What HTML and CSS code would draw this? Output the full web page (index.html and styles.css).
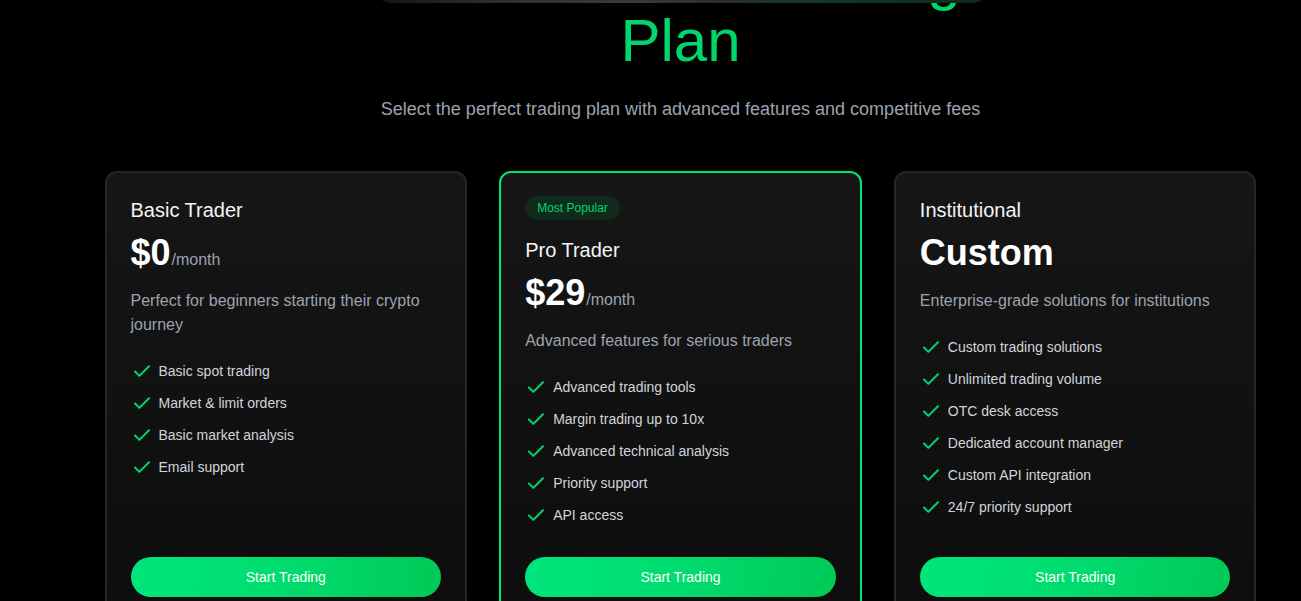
FILE: index.html
```html
<!DOCTYPE html>
<html lang="en">
<head>
<meta charset="utf-8">
<title>Choose Your Trading Plan</title>
<link rel="stylesheet" href="styles.css">
</head>
<body>
<div class="page">
  <div class="content">
    <header class="hero">
      <h1 class="hero-title">Choose Your Trading<br>Plan</h1>
      <p class="hero-sub">Select the perfect trading plan with advanced features and competitive fees</p>
    </header>

    <div class="plans">
      <div class="card">
        <h3 class="card-title">Basic Trader</h3>
        <div class="price"><span class="amount">$0</span><span class="period">/month</span></div>
        <p class="desc">Perfect for beginners starting their crypto journey</p>
        <ul class="features">
          <li><svg class="check" viewBox="0 0 20 20"><path d="M4 10.5 8.4 14.9 18 5.3"/></svg><span>Basic spot trading</span></li>
          <li><svg class="check" viewBox="0 0 20 20"><path d="M4 10.5 8.4 14.9 18 5.3"/></svg><span>Market &amp; limit orders</span></li>
          <li><svg class="check" viewBox="0 0 20 20"><path d="M4 10.5 8.4 14.9 18 5.3"/></svg><span>Basic market analysis</span></li>
          <li><svg class="check" viewBox="0 0 20 20"><path d="M4 10.5 8.4 14.9 18 5.3"/></svg><span>Email support</span></li>
        </ul>
        <button class="btn">Start Trading</button>
      </div>

      <div class="card card-popular">
        <span class="badge">Most Popular</span>
        <h3 class="card-title">Pro Trader</h3>
        <div class="price"><span class="amount">$29</span><span class="period">/month</span></div>
        <p class="desc">Advanced features for serious traders</p>
        <ul class="features">
          <li><svg class="check" viewBox="0 0 20 20"><path d="M4 10.5 8.4 14.9 18 5.3"/></svg><span>Advanced trading tools</span></li>
          <li><svg class="check" viewBox="0 0 20 20"><path d="M4 10.5 8.4 14.9 18 5.3"/></svg><span>Margin trading up to 10x</span></li>
          <li><svg class="check" viewBox="0 0 20 20"><path d="M4 10.5 8.4 14.9 18 5.3"/></svg><span>Advanced technical analysis</span></li>
          <li><svg class="check" viewBox="0 0 20 20"><path d="M4 10.5 8.4 14.9 18 5.3"/></svg><span>Priority support</span></li>
          <li><svg class="check" viewBox="0 0 20 20"><path d="M4 10.5 8.4 14.9 18 5.3"/></svg><span>API access</span></li>
        </ul>
        <button class="btn">Start Trading</button>
      </div>

      <div class="card">
        <h3 class="card-title">Institutional</h3>
        <div class="price"><span class="amount">Custom</span></div>
        <p class="desc">Enterprise-grade solutions for institutions</p>
        <ul class="features">
          <li><svg class="check" viewBox="0 0 20 20"><path d="M4 10.5 8.4 14.9 18 5.3"/></svg><span>Custom trading solutions</span></li>
          <li><svg class="check" viewBox="0 0 20 20"><path d="M4 10.5 8.4 14.9 18 5.3"/></svg><span>Unlimited trading volume</span></li>
          <li><svg class="check" viewBox="0 0 20 20"><path d="M4 10.5 8.4 14.9 18 5.3"/></svg><span>OTC desk access</span></li>
          <li><svg class="check" viewBox="0 0 20 20"><path d="M4 10.5 8.4 14.9 18 5.3"/></svg><span>Dedicated account manager</span></li>
          <li><svg class="check" viewBox="0 0 20 20"><path d="M4 10.5 8.4 14.9 18 5.3"/></svg><span>Custom API integration</span></li>
          <li><svg class="check" viewBox="0 0 20 20"><path d="M4 10.5 8.4 14.9 18 5.3"/></svg><span>24/7 priority support</span></li>
        </ul>
        <button class="btn">Start Trading</button>
      </div>
    </div>

    <div class="topbar"></div>
  </div>
</div>
</body>
</html>
```

FILE: styles.css
```css
* {
  box-sizing: border-box;
}

html, body {
  margin: 0;
  padding: 0;
  background: #000;
}

body {
  font-family: "Liberation Sans", Arial, Helvetica, sans-serif;
  color: #fff;
  overflow: hidden;
}

.page {
  padding-left: 60px;
}

.content {
  position: relative;
  display: flow-root;
  padding-bottom: 40px;
}

.topbar {
  position: absolute;
  top: -37px;
  left: 50%;
  width: 619px;
  height: 40px;
  margin-left: -309px;
  border-radius: 20px;
  background: linear-gradient(90deg, #121212 0%, #2c2c2c 18%, #3a3a3a 42%, #2a2f2b 55%, #0f3a21 75%, #0c2a18 100%);
}

.hero {
  text-align: center;
}

.hero-title {
  margin: -52px 0 0;
  font-size: 60px;
  line-height: 62px;
  font-weight: 400;
  color: #00d66b;
}

.hero-sub {
  margin: 23px 0 0;
  font-size: 18px;
  line-height: 28px;
  color: #9ca3af;
}

.plans {
  max-width: 1152px;
  margin: 48px auto 0;
  display: grid;
  grid-template-columns: repeat(3, 1fr);
  gap: 32px;
}

.card {
  display: flex;
  flex-direction: column;
  align-items: stretch;
  padding: 23px 24px 24px;
  border: 2px solid #262626;
  border-radius: 12px;
  background: linear-gradient(180deg, #161616 0%, #0d0d0d 100%);
}

.card-popular {
  border-color: #00e676;
}

.badge {
  align-self: flex-start;
  padding: 4px 12px;
  margin-bottom: 16px;
  border-radius: 9999px;
  background: #0f2b1b;
  color: #00d66b;
  font-size: 12px;
  line-height: 16px;
}

.card-title {
  margin: 0 0 9px;
  font-size: 20px;
  line-height: 28px;
  font-weight: 400;
  color: #f3f4f6;
}

.price {
  display: flex;
  align-items: baseline;
  margin-bottom: 16px;
}

.amount {
  font-size: 36px;
  line-height: 40px;
  font-weight: 700;
  color: #fff;
}

.period {
  margin-left: 1px;
  font-size: 16px;
  line-height: 24px;
  color: #9ca3af;
}

.desc {
  margin: 0 0 24px;
  font-size: 16px;
  line-height: 24px;
  color: #9ca3af;
}

.features {
  list-style: none;
  margin: 0 0 32px;
  padding: 0;
  flex-grow: 1;
  display: flex;
  flex-direction: column;
  gap: 12px;
}

.features li {
  display: flex;
  align-items: center;
  gap: 8px;
  font-size: 14px;
  line-height: 20px;
  color: #d1d5db;
}

.check {
  width: 20px;
  height: 20px;
  flex-shrink: 0;
  fill: none;
  stroke: #00d66b;
  stroke-width: 2;
  stroke-linecap: round;
  stroke-linejoin: round;
}

.btn {
  height: 40px;
  width: 100%;
  border: 0;
  border-radius: 9999px;
  background: linear-gradient(100deg, #00e67c 0%, #00dc6e 50%, #00c957 100%);
  color: #fff;
  font-family: inherit;
  font-size: 14px;
  cursor: pointer;
}
```
